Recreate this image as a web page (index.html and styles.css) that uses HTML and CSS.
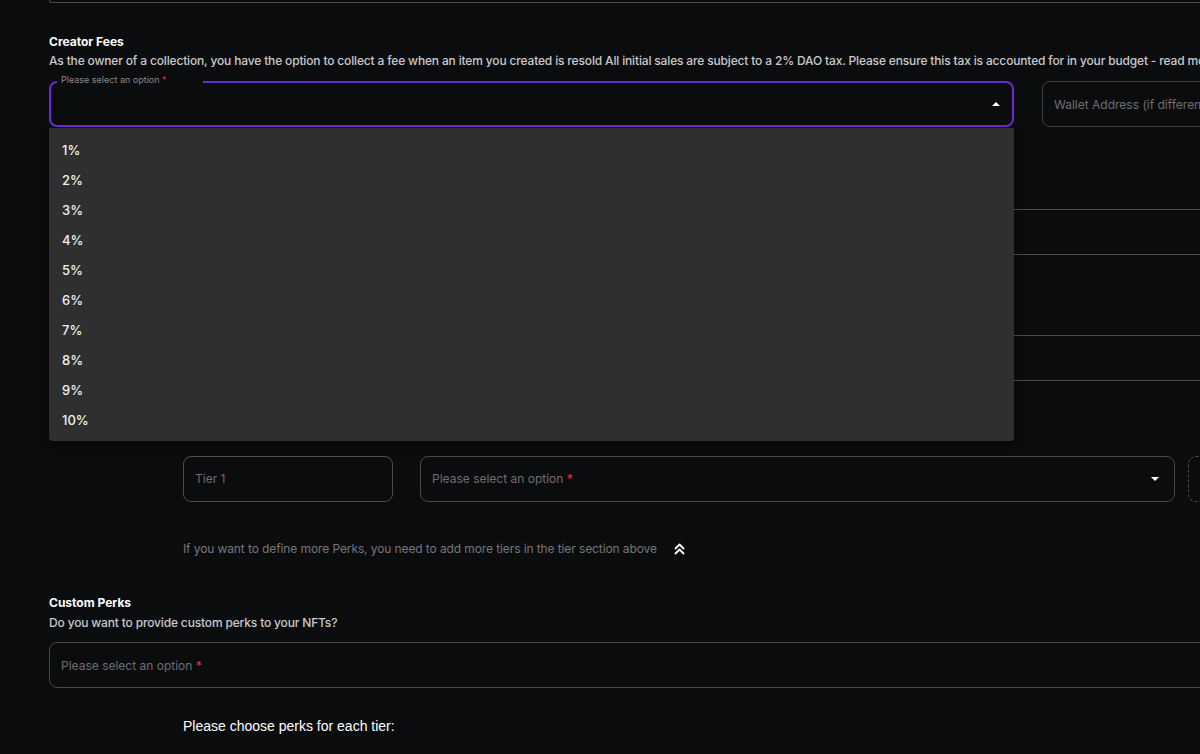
FILE: index.html
```html
<!DOCTYPE html>
<html lang="en">
<head>
<meta charset="utf-8">
<title>Creator Fees</title>
<link rel="stylesheet" href="styles.css">
</head>
<body>
<div class="page">
  <div class="prev-field"></div>

  <section class="fees">
    <h3 class="title">Creator Fees</h3>
    <p class="desc">As the owner of a collection, you have the option to collect a fee when an item you created is resold All initial sales are subject to a 2% DAO tax. Please ensure this tax is accounted for in your budget - read more</p>
    <div class="fee-row">
      <div class="select open">
        <span class="notch"></span>
        <span class="float-label">Please select an option <b class="req">*</b></span>
        <svg class="caret" width="8" height="4" viewBox="0 0 8 4"><path d="M0 4 L4 0 L8 4 Z" fill="#fff"/></svg>
        <ul class="menu">
          <li>1%</li><li>2%</li><li>3%</li><li>4%</li><li>5%</li>
          <li>6%</li><li>7%</li><li>8%</li><li>9%</li><li>10%</li>
        </ul>
      </div>
      <div class="input wallet"><span class="ph">Wallet Address (if different from connected wallet)</span></div>
    </div>
    <div class="box hidden-a"></div>
    <div class="box hidden-b"></div>
  </section>

  <section class="tiers">
    <div class="tier-row">
      <div class="input tier"><span class="ph">Tier 1</span></div>
      <div class="select perk-select">
        <span class="ph">Please select an option <b class="req">*</b></span>
        <svg class="caret" width="8" height="4" viewBox="0 0 8 4"><path d="M0 0 L8 0 L4 4 Z" fill="#fff"/></svg>
      </div>
      <div class="dashed"></div>
    </div>
    <p class="help">If you want to define more Perks, you need to add more tiers in the tier section above
      <svg class="dbl" width="11" height="12" viewBox="0 0 11 12"><path d="M1.5 5.5 L5.5 1.5 L9.5 5.5 M1.5 10.5 L5.5 6.5 L9.5 10.5" fill="none" stroke="#fff" stroke-width="1.8" stroke-linecap="round" stroke-linejoin="round"/></svg>
    </p>
  </section>

  <section class="perks">
    <h3 class="title">Custom Perks</h3>
    <p class="desc">Do you want to provide custom perks to your NFTs?</p>
    <div class="select wide"><span class="ph">Please select an option <b class="req">*</b></span></div>
    <p class="choose">Please choose perks for each tier:</p>
  </section>
</div>
</body>
</html>
```

FILE: styles.css
```css
html, body {
  margin: 0;
  padding: 0;
  width: 1200px;
  height: 754px;
  overflow: hidden;
  background: #0b0c0e;
}

.page {
  width: 1600px;
  padding-left: 49px;
  font-family: Inter, "Noto Sans", sans-serif;
  color: #fff;
}

.prev-field {
  box-sizing: border-box;
  height: 3px;
  width: 1300px;
  border: 1px solid #4a4a4a;
  border-top: none;
  border-radius: 0 0 8px 8px;
}

.title {
  margin: 31px 0 0;
  font-size: 12px;
  line-height: 16px;
  font-weight: 700;
  color: #fff;
}

.desc {
  margin: 3px 0 0;
  font-size: 12px;
  line-height: 16px;
  font-weight: 500;
  letter-spacing: -0.16px;
  color: #c9c9cc;
  white-space: nowrap;
}

.fee-row {
  display: flex;
  margin-top: 12px;
}

.select {
  box-sizing: border-box;
  position: relative;
  display: flex;
  align-items: center;
  height: 46px;
  border: 1px solid #474749;
  border-radius: 8px;
  padding: 0 11px;
}

.select.open {
  width: 965px;
  border: 2px solid #6d2ad2;
  padding: 0 10px;
  justify-content: flex-end;
}

.caret {
  margin-left: auto;
  margin-right: 2px;
}

.notch {
  position: absolute;
  top: -2px;
  left: 6px;
  width: 146px;
  height: 2px;
  background: #0b0c0e;
}

.float-label {
  position: absolute;
  top: -9px;
  left: 10px;
  font-size: 9px;
  line-height: 12px;
  color: #8a8a8d;
}

.req {
  color: #e0344a;
  font-weight: 400;
}

.menu {
  position: absolute;
  top: 45px;
  left: -2px;
  width: 965px;
  box-sizing: border-box;
  margin: 0;
  padding: 7px 0 6px;
  list-style: none;
  background: #2f2f2f;
  border-radius: 0 0 4px 4px;
  box-shadow: 0 4px 8px rgba(0, 0, 0, 0.4);
  z-index: 5;
}

.menu li {
  height: 30px;
  line-height: 30px;
  padding-left: 13px;
  font-size: 13px;
  font-weight: 500;
  color: #f0f0f0;
}

.input {
  box-sizing: border-box;
  display: flex;
  align-items: center;
  height: 46px;
  border: 1px solid #404042;
  border-radius: 8px;
  padding: 0 11px;
}

.wallet {
  width: 400px;
  margin-left: 28px;
}

.ph {
  font-size: 12px;
  color: #6e6e72;
  white-space: nowrap;
}

.box {
  box-sizing: border-box;
  width: 1300px;
  height: 46px;
  margin-left: 134px;
  border: 1px solid #4a4a4c;
  border-radius: 8px;
}

.hidden-a { margin-top: 82px; }
.hidden-b { margin-top: 80px; }

.tiers {
  padding-left: 134px;
}

.tier-row {
  display: flex;
  margin-top: 75px;
}

.tier {
  width: 210px;
  border-color: #4c4c4e;
}

.tier-row .ph {
  margin-bottom: 2px;
}

.perk-select {
  width: 755px;
  margin-left: 27px;
}

.perk-select .caret {
  margin-right: 4px;
}

.dashed {
  box-sizing: border-box;
  width: 200px;
  height: 46px;
  margin-left: 13px;
  border: 1px dashed #4a4a4c;
  border-radius: 8px;
}

.help {
  margin: 39px 0 0;
  display: flex;
  align-items: center;
  gap: 17px;
  font-size: 12px;
  line-height: 16px;
  letter-spacing: -0.1px;
  color: #76767a;
  white-space: nowrap;
}

.perks .title {
  margin-top: 38px;
}

.perks .desc {
  margin-top: 4px;
}

.wide {
  width: 1300px;
  margin-top: 11px;
}

.choose {
  margin: 29px 0 0 134px;
  font-family: "Liberation Sans", Arial, sans-serif;
  font-size: 14px;
  line-height: 18px;
  color: #fff;
}
```
